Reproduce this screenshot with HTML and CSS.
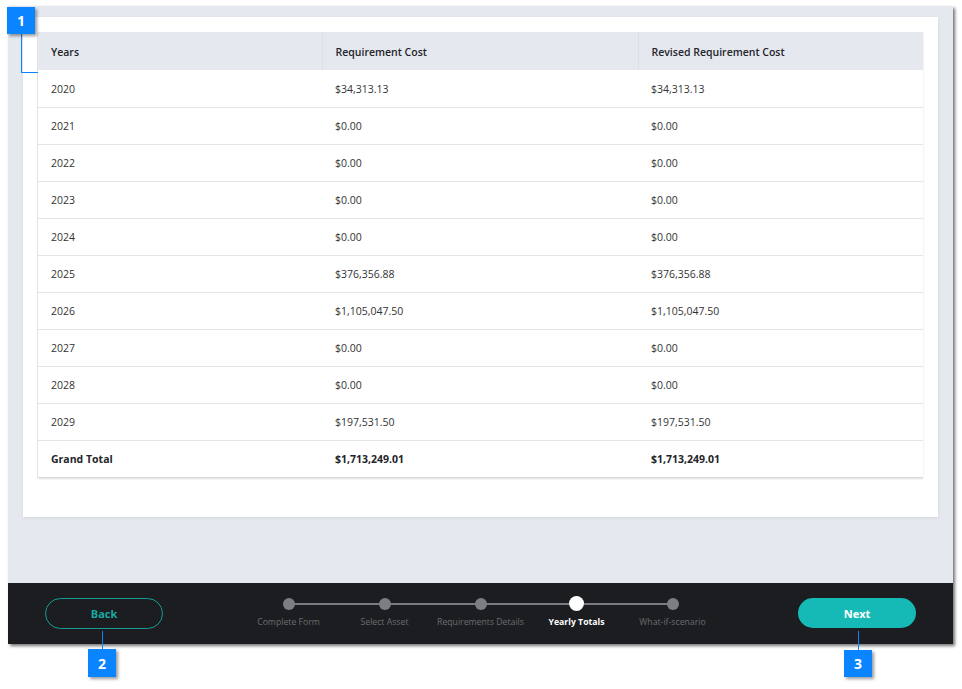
FILE: index.html
```html
<!DOCTYPE html>
<html>
<head>
<meta charset="utf-8">
<link rel="stylesheet" href="styles.css">
</head>
<body>
<div class="shot">
  <div class="main">
    <div class="card">
      <table class="totals">
        <thead>
          <tr><th class="c1">Years</th><th class="c2">Requirement Cost</th><th class="c3">Revised Requirement Cost</th></tr>
        </thead>
        <tbody>
          <tr><td>2020</td><td>$34,313.13</td><td>$34,313.13</td></tr>
          <tr><td>2021</td><td>$0.00</td><td>$0.00</td></tr>
          <tr><td>2022</td><td>$0.00</td><td>$0.00</td></tr>
          <tr><td>2023</td><td>$0.00</td><td>$0.00</td></tr>
          <tr><td>2024</td><td>$0.00</td><td>$0.00</td></tr>
          <tr><td>2025</td><td>$376,356.88</td><td>$376,356.88</td></tr>
          <tr><td>2026</td><td>$1,105,047.50</td><td>$1,105,047.50</td></tr>
          <tr><td>2027</td><td>$0.00</td><td>$0.00</td></tr>
          <tr><td>2028</td><td>$0.00</td><td>$0.00</td></tr>
          <tr><td>2029</td><td>$197,531.50</td><td>$197,531.50</td></tr>
          <tr class="total"><td>Grand Total</td><td>$1,713,249.01</td><td>$1,713,249.01</td></tr>
        </tbody>
      </table>
    </div>
  </div>
  <div class="footer">
    <button class="btn btn-back">Back</button>
    <div class="stepper">
      <div class="step"><span class="dot"></span><span class="label">Complete Form</span></div>
      <div class="step"><span class="dot"></span><span class="label">Select Asset</span></div>
      <div class="step"><span class="dot"></span><span class="label">Requirements Details</span></div>
      <div class="step active"><span class="dot"></span><span class="label">Yearly Totals</span></div>
      <div class="step"><span class="dot"></span><span class="label">What-if-scenario</span></div>
    </div>
    <button class="btn btn-next">Next</button>
  </div>
</div>

<div class="callout-line line1v"></div>
<div class="callout-line line1h"></div>
<div class="badge badge1">1</div>

<div class="callout-line line2"></div>
<div class="badge badge2">2</div>

<div class="callout-line line3"></div>
<div class="badge badge3">3</div>
</body>
</html>
```

FILE: styles.css
```css
html, body {
  margin: 0;
  padding: 0;
  background: #ffffff;
  font-family: "Open Sans", "Noto Sans", sans-serif;
}
body {
  position: relative;
  width: 962px;
  height: 689px;
  overflow: hidden;
}
.shot {
  margin: 6px 0 0 8px;
  width: 945px;
  height: 638px;
  display: flex;
  flex-direction: column;
  box-shadow: 2px 2px 3px rgba(0, 0, 0, 0.55);
}
.main {
  height: 577px;
  background: #e6e8f0;
  padding: 11px 15px 0 15px;
  box-sizing: border-box;
}
.card {
  background: #ffffff;
  height: 500px;
  box-sizing: border-box;
  padding: 15px 15px 0 15px;
  box-shadow: 0 1px 3px rgba(0, 0, 0, 0.08);
}
.totals {
  width: 885px;
  border-collapse: collapse;
  table-layout: fixed;
  box-shadow: 0 1px 2px rgba(0, 0, 0, 0.12), -1px 0 0 #eceef2;
  font-size: 10.5px;
  color: #333333;
}
.totals th.c1 { width: 284px; }
.totals th.c2 { width: 316px; }
.totals th.c3 { width: 285px; }
.totals th {
  background: #e6e8f0;
  height: 38px;
  padding: 2px 13px 0 13px;
  text-align: left;
  font-weight: 600;
  color: #222428;
  border-right: 1px solid #dcdfe6;
  box-sizing: border-box;
}
.totals th:last-child { border-right: none; }
.totals td {
  height: 37px;
  padding: 1px 13px 0 13px;
  box-sizing: border-box;
  border-bottom: 1px solid #e3e5ea;
  vertical-align: middle;
}
.totals tr.total td {
  font-weight: 700;
  color: #222428;
  border-bottom: 1px solid #d8dbe2;
}
.footer {
  height: 61px;
  background: #1c1d20;
  display: flex;
  align-items: flex-start;
  justify-content: space-between;
  padding: 15px 37px 0 37px;
  box-sizing: border-box;
}
.btn {
  width: 118px;
  height: 31px;
  border-radius: 16px;
  font-family: "Open Sans", "Noto Sans", sans-serif;
  font-size: 11px;
  font-weight: 700;
  box-sizing: border-box;
  padding: 0;
}
.btn-back {
  background: transparent;
  border: 1px solid #169c96;
  color: #17aaa4;
}
.btn-next {
  background: #15bab6;
  border: none;
  color: #ffffff;
  height: 30px;
}
.stepper {
  position: relative;
  display: flex;
  margin-top: -15px;
  padding-top: 14px;
}
.stepper::before {
  content: "";
  position: absolute;
  left: 48px;
  right: 48px;
  top: 20px;
  height: 2px;
  background: #7a7b80;
}
.step {
  width: 96px;
  display: flex;
  flex-direction: column;
  align-items: center;
  position: relative;
}
.dot {
  width: 12px;
  height: 12px;
  border-radius: 50%;
  background: #7d7e83;
  margin-top: 1px;
}
.step.active .dot {
  width: 15px;
  height: 15px;
  margin-top: -1px;
  margin-bottom: -1px;
  background: #ffffff;
}
.label {
  margin-top: 6px;
  font-size: 8.7px;
  color: #6b6d72;
  white-space: nowrap;
}
.step.active .label {
  color: #ffffff;
  font-weight: 700;
}
.badge {
  position: absolute;
  width: 28px;
  height: 28px;
  background: #0a84ff;
  color: #ffffff;
  font-family: "Open Sans", "Noto Sans", sans-serif;
  font-size: 14px;
  font-weight: 700;
  display: flex;
  align-items: center;
  justify-content: center;
  box-shadow: 2px 2px 3px rgba(0, 0, 0, 0.4);
}
.badge1 { left: 7px; top: 7px; height: 27px; }
.badge2 { left: 88px; top: 649px; }
.badge3 { left: 844px; top: 650px; height: 27px; }
.callout-line {
  position: absolute;
  background: #0a84ff;
}
.line1v { left: 21px; top: 34px; width: 1px; height: 39px; }
.line1h { left: 21px; top: 72px; width: 17px; height: 1px; }
.line2 { left: 102px; top: 631px; width: 1px; height: 18px; }
.line3 { left: 858px; top: 631px; width: 1px; height: 19px; }
```
